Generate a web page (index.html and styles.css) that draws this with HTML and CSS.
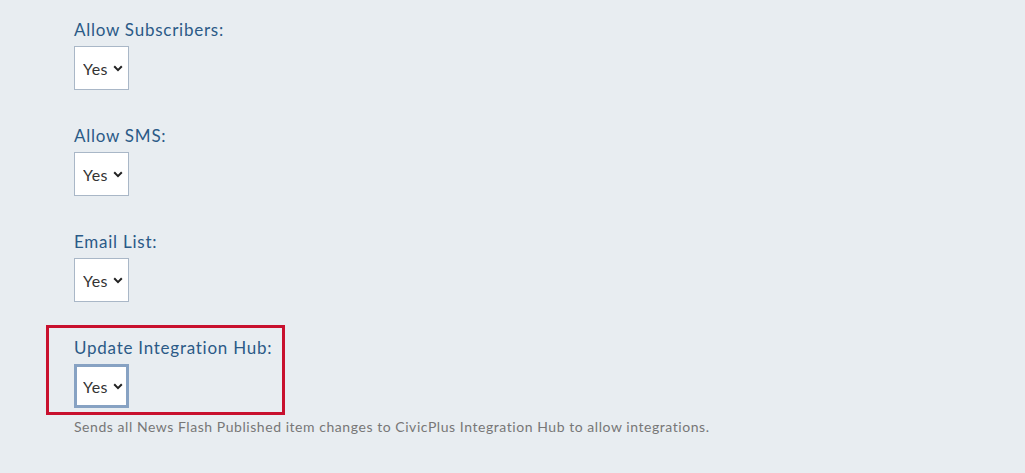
FILE: index.html
```html
<!DOCTYPE html>
<html lang="en">
<head>
    <meta charset="UTF-8">
    <title>News Flash Settings</title>
    <link rel="stylesheet" href="styles.css">
</head>
<body>
<div class="settings">
    <div class="field">
        <label for="allowSubscribers">Allow Subscribers:</label>
        <select id="allowSubscribers" class="yes-no">
            <option>Yes</option>
            <option>No</option>
        </select>
    </div>

    <div class="field">
        <label for="allowSms">Allow SMS:</label>
        <select id="allowSms" class="yes-no">
            <option>Yes</option>
            <option>No</option>
        </select>
    </div>

    <div class="field">
        <label for="emailList">Email List:</label>
        <select id="emailList" class="yes-no">
            <option>Yes</option>
            <option>No</option>
        </select>
    </div>

    <div class="field highlight">
        <label for="integrationHub">Update Integration Hub:</label>
        <select id="integrationHub" class="yes-no focused">
            <option>Yes</option>
            <option>No</option>
        </select>
    </div>
    <p class="help">Sends all News Flash Published item changes to CivicPlus Integration Hub to allow integrations.</p>
</div>
</body>
</html>
```

FILE: styles.css
```css
body {
    margin: 0;
    padding: 0;
    background-color: #e8edf1;
    font-family: "Lato", "Open Sans", Arial, sans-serif;
}
.settings { padding: 18px 0 0 74px; }
.field { margin-bottom: 34px; }
.field label { display: block; font-size: 17px; line-height: 24px; letter-spacing: 0.75px; color: #2b5a87; margin-bottom: 4px; }
.yes-no {
    display: block;
    width: 55px;
    height: 44px;
    padding: 0 0 0 8px;
    font-family: "Lato", Arial, sans-serif;
    font-size: 16px;
    letter-spacing: 0.4px;
    color: #333;
    background: #fff url("data:image/svg+xml,%3Csvg xmlns='http://www.w3.org/2000/svg' width='10' height='7' viewBox='0 0 10 7'%3E%3Cpath d='M1.2 1.3 5 5.1 8.8 1.3' fill='none' stroke='%23222' stroke-width='2'/%3E%3C/svg%3E") no-repeat right 5px center;
    border: 1px solid #a9b7c7;
    border-radius: 0;
    -webkit-appearance: none;
    appearance: none;
}
.yes-no.focused { border: 3px solid #87a2c3; padding-left: 6px; background-position: right 3px center; }
.highlight { display: inline-block; width: 208px; margin: -11px 0 0 -28px; padding: 8px 0 4px 25px; border: 3px solid #c8102e; }
.help { margin: 3px 0 0; font-size: 14px; line-height: 18px; letter-spacing: 0.55px; color: #777; }
```
